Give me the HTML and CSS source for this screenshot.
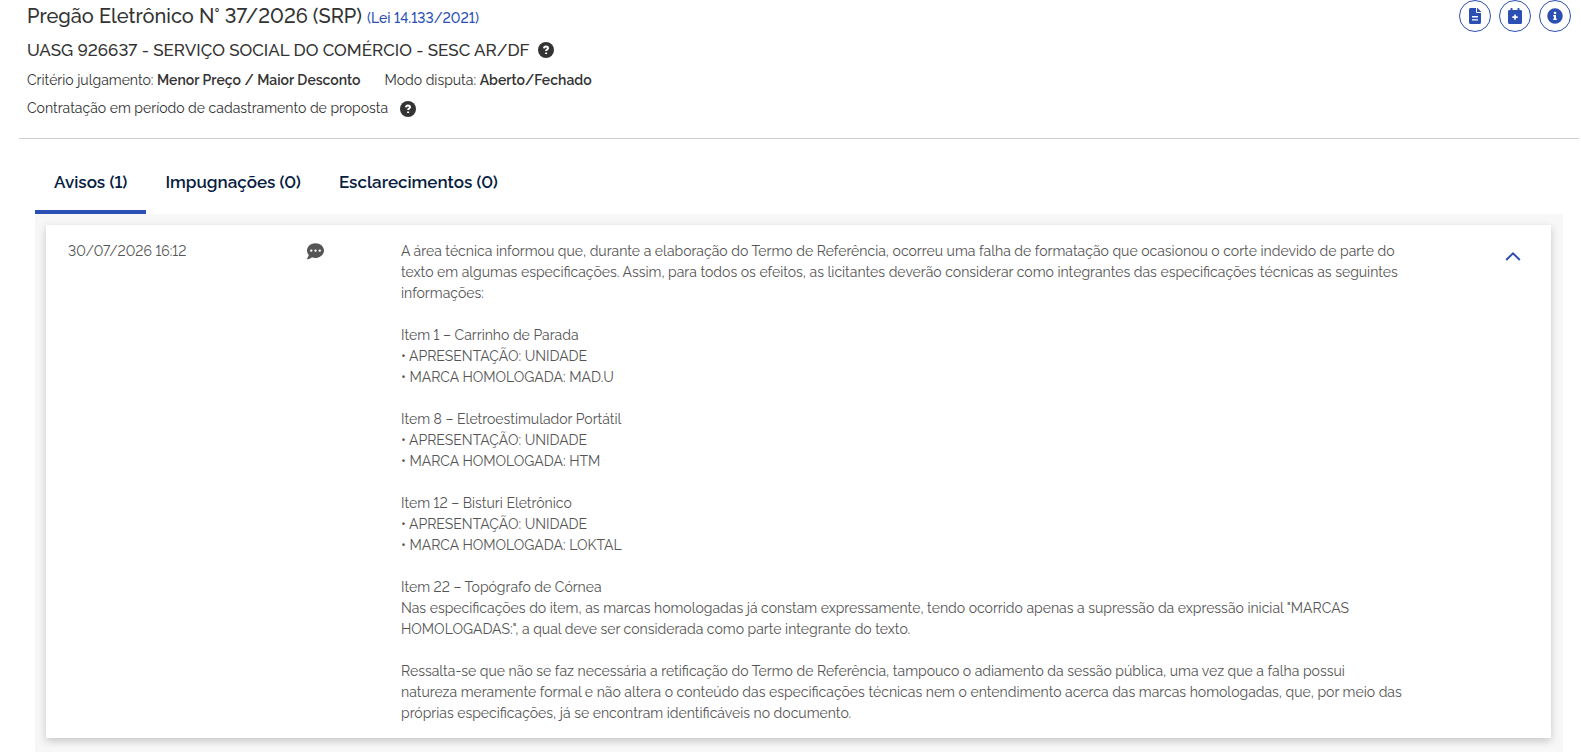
FILE: index.html
```
<!DOCTYPE html>
<html lang="pt-BR">
<head>
<meta charset="utf-8">
<meta name="viewport" content="width=device-width, initial-scale=1">
<title>Pregão Eletrônico N° 37/2026</title>
<link rel="stylesheet" href="styles.css">
</head>
<body>
<header class="purchase">
  <div class="purchase-info">
    <h1 class="title">Pregão Eletrônico N° 37/2026 (SRP) <a class="law" href="#lei">(Lei 14.133/2021)</a></h1>
    <h2 class="agency">UASG 926637 - SERVIÇO SOCIAL DO COMÉRCIO - SESC AR/DF
      <button class="help" type="button" aria-label="Ajuda sobre a UASG"><svg viewBox="0 0 16 16"><circle cx="8" cy="8" r="8"/><path d="M6 6.3C6.1 5 7 4.500 8 4.500s2 .6 2 1.700c0 1.300-1.900 1.400-1.900 2.800"/><path d="M8.100 10.500v1.500"/></svg></button></h2>
    <p class="criteria"><span>Critério julgamento: <strong>Menor Preço / Maior Desconto</strong></span><span>Modo disputa: <strong>Aberto/Fechado</strong></span></p>
    <p class="status">Contratação em período de cadastramento de proposta
      <button class="help" type="button" aria-label="Ajuda sobre a situação"><svg viewBox="0 0 16 16"><circle cx="8" cy="8" r="8"/><path d="M6 6.3C6.1 5 7 4.500 8 4.500s2 .6 2 1.700c0 1.300-1.900 1.400-1.900 2.800"/><path d="M8.100 10.500v1.500"/></svg></button></p>
  </div>
  <div class="actions">
    <button class="round" type="button" aria-label="Documento"><svg viewBox="0 0 384 512"><path d="M224 136V0H48C20 0 0 20 0 48v416c0 28 20 48 48 48h288c28 0 48-20 48-48V160H248c-13 0-24-11-24-24zm64 252c0 7-5 12-12 12H108c-7 0-12-5-12-12v-20c0-7 5-12 12-12h168c7 0 12 5 12 12v20zm0-100c0 7-5 12-12 12H108c-7 0-12-5-12-12v-20c0-7 5-12 12-12h168c7 0 12 5 12 12v20zM384 122v6H256V0h6c6 0 12 3 17 7l98 98c4 5 7 11 7 17z"/></svg></button>
    <button class="round" type="button" aria-label="Adicionar à agenda"><svg viewBox="0 0 448 512"><path fill-rule="evenodd" d="M96 0h32c9 0 16 7 16 16v48h160V16c0-9 7-16 16-16h32c9 0 16 7 16 16v48h32c27 0 48 21 48 48v352c0 27-21 48-48 48H48c-27 0-48-21-48-48V112c0-27 21-48 48-48h32V16c0-9 7-16 16-16zm102 204v60h-60v52h60v60h52v-60h60v-52h-60v-60z"/></svg></button>
    <button class="round" type="button" aria-label="Informações"><svg viewBox="0 0 512 512"><path fill-rule="evenodd" d="M256 8a248 248 0 1 0 0 496 248 248 0 0 0 0-496zm0 110a42 42 0 1 1 0 84 42 42 0 0 1 0-84zm56 254c0 7-5 12-12 12h-88c-7 0-12-5-12-12v-24c0-7 5-12 12-12h12v-64h-12c-7 0-12-5-12-12v-24c0-7 5-12 12-12h64c7 0 12 5 12 12v100h12c7 0 12 5 12 12z"/></svg></button>
  </div>
</header>
<main class="notices">
  <nav class="tabs" role="tablist">
    <button class="tab active" type="button" role="tab" aria-selected="true">Avisos (1)</button>
    <button class="tab" type="button" role="tab" aria-selected="false">Impugnações (0)</button>
    <button class="tab" type="button" role="tab" aria-selected="false">Esclarecimentos (0)</button>
  </nav>
  <section class="panel">
    <article class="card">
      <time class="date" datetime="2026-07-30T16:12">30/07/2026 16:12</time>
      <svg class="comment" viewBox="0 0 512 512"><path fill-rule="evenodd" d="M256 8C115 8 0 105 0 228c0 50 20 95 53 132C42 415 3 470 2 472c-2 3-3 7-1 11s4 5 7 5c66 0 116-32 140-57 33 12 69 19 108 19 141 0 256-99 256-222S397 8 256 8zM128 192a36 36 0 1 1 0 72 36 36 0 0 1 0-72zm128 0a36 36 0 1 1 0 72 36 36 0 0 1 0-72zm128 0a36 36 0 1 1 0 72 36 36 0 0 1 0-72z"/></svg>
      <div class="message">
        <p>A área técnica informou que, durante a elaboração do Termo de Referência, ocorreu uma falha de formatação que ocasionou o corte indevido de parte do texto em algumas especificações. Assim, para todos os efeitos, as licitantes deverão considerar como integrantes das especificações técnicas as seguintes informações:</p>
        <p>Item 1 – Carrinho de Parada<br>• APRESENTAÇÃO: UNIDADE<br>• MARCA HOMOLOGADA: MAD.U</p>
        <p>Item 8 – Eletroestimulador Portátil<br>• APRESENTAÇÃO: UNIDADE<br>• MARCA HOMOLOGADA: HTM</p>
        <p>Item 12 – Bisturi Eletrônico<br>• APRESENTAÇÃO: UNIDADE<br>• MARCA HOMOLOGADA: LOKTAL</p>
        <p>Item 22 – Topógrafo de Córnea<br>Nas especificações do item, as marcas homologadas já constam expressamente, tendo ocorrido apenas a supressão da expressão inicial "MARCAS HOMOLOGADAS:", a qual deve ser considerada como parte integrante do texto.</p>
        <p>Ressalta-se que não se faz necessária a retificação do Termo de Referência, tampouco o adiamento da sessão pública, uma vez que a falha possui<br>natureza meramente formal e não altera o conteúdo das especificações técnicas nem o entendimento acerca das marcas homologadas, que, por meio das próprias especificações, já se encontram identificáveis no documento.</p>
      </div>
      <button class="toggle" type="button" aria-label="Recolher aviso" aria-expanded="true"><svg viewBox="0 0 16 9"><path d="M1.200 8 8 1.400 14.800 8"/></svg></button>
    </article>
  </section>
</main>
</body>
</html>
```
FILE: styles.css
```
* { box-sizing: border-box; }
body {
  margin: 0;
  background: #fff;
  color: #333;
  font-family: Raleway, Lato, sans-serif;
  font-size: 14px;
  font-variant-numeric: lining-nums;
  line-height: 21px;
}
h1, h2, p { margin: 0; font-weight: 400; }
button { margin: 0; padding: 0; border: 0; background: none; font: inherit; font-variant-numeric: lining-nums; cursor: pointer; }
svg { display: block; }
.purchase {
  display: flex;
  justify-content: space-between;
  margin: 0 2px 0 19px;
  padding: 0 8px 19px;
  border-bottom: 1px solid #ccc;
}
.title { font-size: 20px; line-height: 32px; font-weight: 500; }
.law { font-size: 14px; line-height: 14px; font-weight: 500; color: #2c4fb4; text-decoration: none; }
.agency { display: flex; align-items: center; gap: 8px; font-size: 17px; line-height: 36px; font-weight: 500; }
.criteria { display: flex; gap: 24px; line-height: 24px; }
.criteria strong { font-weight: 600; }
.status { display: flex; align-items: center; gap: 12px; padding-top: 6px; }
.help { flex: none; width: 16px; height: 16px; }
.help svg { width: 16px; height: 16px; fill: #333; }
.help path { fill: none; stroke: #fff; stroke-width: 2; }
.actions { display: flex; gap: 8px; }
.round {
  display: grid;
  place-items: center;
  width: 32px;
  height: 32px;
  border: 1px solid #2c4fb4;
  border-radius: 50%;
}
.round svg { height: 16px; fill: #2c4fb4; }
.notices { padding: 15px 18px 0 35px; }
.tabs { display: flex; }
.tab {
  height: 60px;
  padding: 0 19px;
  border-bottom: 4px solid transparent;
  font-size: 17px;
  font-weight: 600;
  color: #071d41;
}
.tab.active { border-color: #2c4fb4; }
.panel { padding: 11px 12px 14px 11px; background: #f7f7f7; }
.card {
  display: grid;
  grid-template-columns: 239fr 94fr 1016fr 134fr;
  align-items: start;
  padding: 16px 0 14px 22px;
  background: #fff;
  color: #555;
  box-shadow: 0 3px 8px rgba(0, 0, 0, .2);
}
.comment { width: 17px; height: 17px; margin-top: 2px; fill: #555; }
.message { display: grid; gap: 21px; }
.toggle { display: grid; place-items: center; width: 24px; height: 24px; margin-top: 3px; margin-right: 26px; justify-self: end; }
.toggle svg { width: 16px; height: 9px; fill: none; stroke: #2c4fb4; stroke-width: 2; }
```
